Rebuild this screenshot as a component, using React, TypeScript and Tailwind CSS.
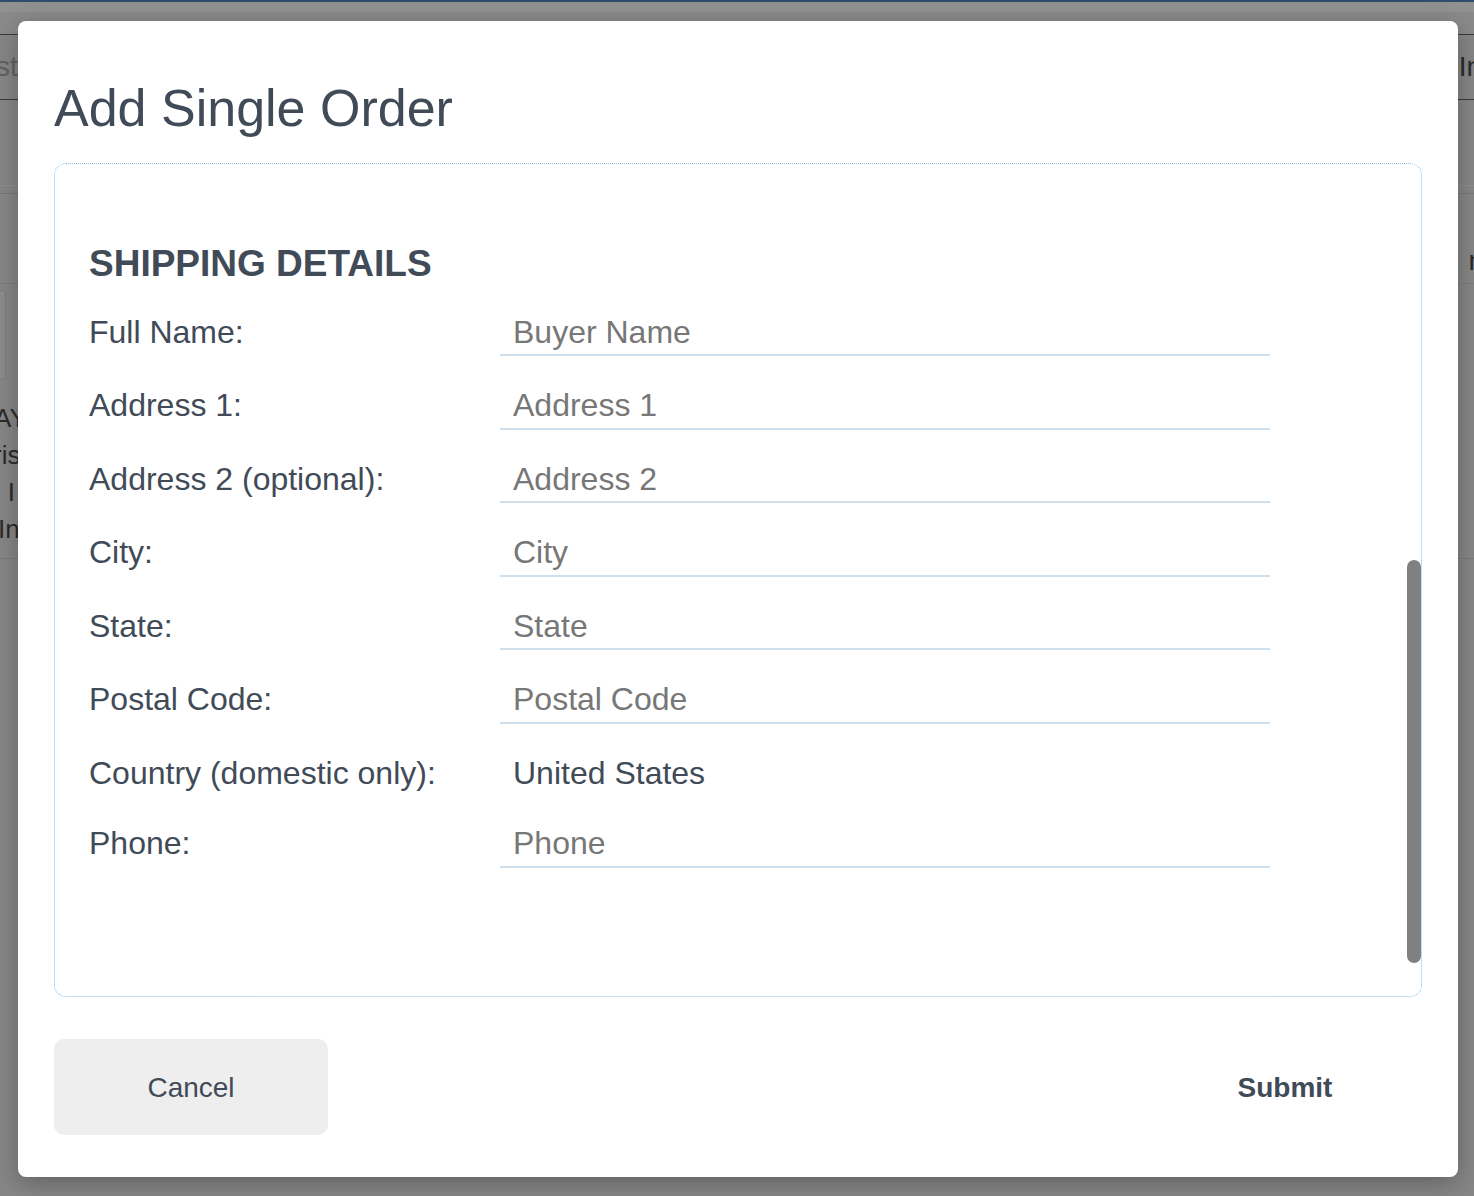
import React from "react";

const fields = [
  { label: "Full Name:", placeholder: "Buyer Name" },
  { label: "Address 1:", placeholder: "Address 1" },
  { label: "Address 2 (optional):", placeholder: "Address 2" },
  { label: "City:", placeholder: "City" },
  { label: "State:", placeholder: "State" },
  { label: "Postal Code:", placeholder: "Postal Code" },
  { label: "Country (domestic only):", value: "United States" },
  { label: "Phone:", placeholder: "Phone" },
];

function BackgroundPage() {
  // the page behind the dialog, mostly hidden, dimmed
  return (
    <div className="flex flex-col w-full h-full bg-[#868686] text-[28px] leading-[34px]">
      <div className="h-[2px] bg-[#2e4d6c]" />
      <div className="h-[10px] bg-[#919191]" />
      <div className="h-[22px] bg-[#8a8a8a]" />
      <div className="flex items-center justify-between h-[66px] border-y border-[#3a3a3a]">
        <span className="-ml-[4px] text-[#606060]">st</span>
        <span className="-mr-[8px] text-[#2b2b2b]">In</span>
      </div>
      <div className="h-[85px]" />
      <div className="h-[8px] border-t border-[#8f8f8f]" />
      <div className="flex justify-between h-[90px] border-t border-[#777]">
        <span />
        <span className="-mr-[10px] mt-[50px] text-[#2b2b2b]">n</span>
      </div>
      <div className="flex justify-between border-t border-[#7d7d7d] h-[275px]">
        <div className="flex flex-col">
          <div className="mt-[6px] -ml-[4px] w-[10px] h-[90px] rounded-[4px] border border-[#7a7a7a] bg-[#8c8c8c]" />
          <div className="flex flex-col mt-[20px] -ml-[6px] text-[26px] leading-[37px] text-[#2b2b2b]">
            <span>AY</span>
            <span className="-ml-[1px]">ris</span>
            <span className="-ml-[8px]">d I</span>
            <span className="ml-[4px]">In</span>
          </div>
        </div>
      </div>
      <div className="border-t border-[#7a7a7a]" />
    </div>
  );
}

export default function App() {
  return (
    <div
      className="relative w-[1474px] h-[1196px] overflow-hidden"
      style={{ fontFamily: '"Liberation Sans", Arial, sans-serif' }}
    >
      <BackgroundPage />

      {/* Dialog */}
      <div className="absolute left-[18px] top-[21px] w-[1440px] h-[1156px] flex flex-col px-[36px] bg-white rounded-[8px] shadow-[0_6px_24px_rgba(0,0,0,0.28)]">
        <h1 className="pt-[57px] mb-[25px] text-[52px] leading-[60px] text-[#414b58]">
          Add Single Order
        </h1>

        <div className="relative h-[834px] border border-dotted border-[#86c0ec] rounded-[12px] pl-[34px]">
          <h2 className="pt-[78px] text-[37px] leading-[44px] font-bold text-[#414b58]">
            SHIPPING DETAILS
          </h2>

          <div className="flex flex-col gap-[25.5px] mt-[22px]">
            {fields.map((f) => (
              <div
                key={f.label}
                className={`flex items-baseline ${f.value ? "h-[45px]" : "h-[48px]"}`}
              >
                <label className="w-[411px] text-[32px] leading-[36px] text-[#414b58]">
                  {f.label}
                </label>
                {f.value ? (
                  <span className="w-[770px] pl-[13px] pt-[6px] text-[32px] leading-[36px] text-[#414b58]">
                    {f.value}
                  </span>
                ) : (
                  <input
                    type="text"
                    placeholder={f.placeholder}
                    className="w-[770px] h-[48px] pl-[13px] pt-[6px] pb-[4px] border-b-2 border-[#cfe0ec] bg-transparent text-[32px] leading-[36px] text-[#414b58] placeholder:text-[#777777] outline-none"
                  />
                )}
              </div>
            ))}
          </div>

          {/* scroll thumb */}
          <div className="absolute right-0 top-[396px] w-[14px] h-[403px] rounded-full bg-[#808080]" />
        </div>

        <div className="flex items-center justify-between mt-[42px]">
          <button className="w-[274px] h-[96px] rounded-[10px] bg-[#eeeeee] pt-[2px] text-[28px] text-[#414b58]">
            Cancel
          </button>
          <button className="w-[274px] h-[96px] pt-[2px] text-[28px] font-bold text-[#414b58]">
            Submit
          </button>
        </div>
      </div>
    </div>
  );
}
